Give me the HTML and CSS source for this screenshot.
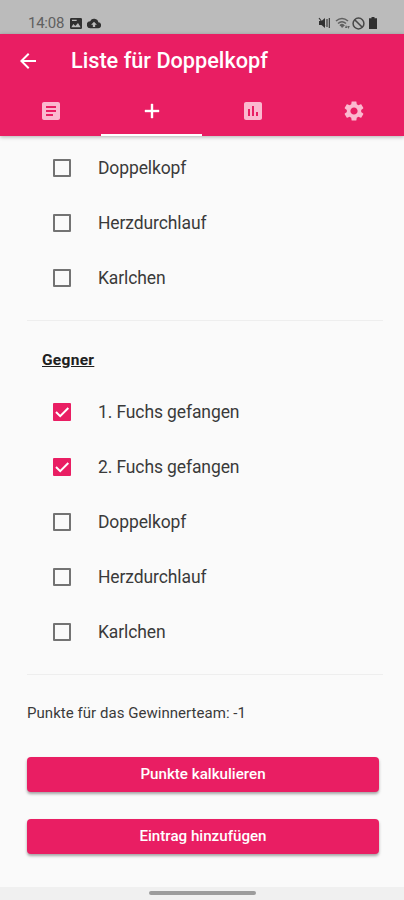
FILE: index.html
```html
<!DOCTYPE html>
<html lang="de">
<head>
<meta charset="utf-8">
<title>Liste für Doppelkopf</title>
<link rel="stylesheet" href="styles.css">
</head>
<body>
<div class="status">
  <span class="clock">14:08</span>
  <svg class="s-image" viewBox="3 3 18 18" preserveAspectRatio="none"><path d="M21 19V5a2 2 0 0 0-2-2H5a2 2 0 0 0-2 2v14a2 2 0 0 0 2 2h14a2 2 0 0 0 2-2zM8 13l3 3 4-5 4 7H5zM6 6h7v2H6z" fill-rule="evenodd"/></svg>
  <svg class="s-cloud" viewBox="0 3 24 18"><path d="M19.400 10A7.500 7.500 0 0 0 5.400 8 6 6 0 0 0 6 20h13a5 5 0 0 0 .4-10zM12 9l5 5h-3v4h-4v-4H7z" fill-rule="evenodd"/></svg>
  <div class="status-right">
    <svg class="s-mute" viewBox="0 0 12 12"><path d="M1 4h2.500L7 1v10L3.500 8H1z"/><path d="M1 1l6 8M9 2v8M11.300 1v10" fill="none" stroke="currentColor" stroke-width="1.100"/></svg>
    <svg class="s-wifi" viewBox="0 0 16 13"><path d="M1 4q6-5 12 0M3 6.500q4-3.500 8 0M5 8.700q2-2 4 0" fill="none" stroke="currentColor" stroke-width="1.600"/><path d="M5 8l2 3 3-3zM11 8l1.500 3H10zM13.500 12l-1.300-3h2.600z"/></svg>
    <svg class="s-block" viewBox="0 0 12 12"><circle cx="6" cy="6" r="5" fill="none" stroke="currentColor" stroke-width="1.400"/><path d="M2.500 2.500l7 7" stroke="currentColor" stroke-width="1.500"/></svg>
    <svg class="s-battery" viewBox="0 0 8 12"><path d="M2.500 0h3v1.300H8V12H0V1.300h2.500z"/></svg>
  </div>
</div>
<header class="appbar">
  <div class="title-row">
    <svg class="back" viewBox="0 0 24 24"><path d="M20 11H7.830l5.590-5.590L12 4l-8 8 8 8 1.410-1.410L7.830 13H20v-2z"/></svg>
    <h1>Liste für Doppelkopf</h1>
  </div>
  <nav class="tabs">
    <div class="tab"><svg viewBox="0 0 24 24"><path d="M19 3H5c-1.100 0-2 .9-2 2v14c0 1.100.9 2 2 2h14c1.100 0 2-.9 2-2V5c0-1.100-.9-2-2-2zm-5 14H7v-2h7v2zm3-4H7v-2h10v2zm0-4H7V7h10v2z"/></svg></div>
    <div class="tab active"><svg viewBox="0 0 24 24"><path d="M19 13h-6v6h-2v-6H5v-2h6V5h2v6h6v2z"/></svg></div>
    <div class="tab"><svg viewBox="0 0 24 24"><path d="M19 3H5c-1.100 0-2 .9-2 2v14c0 1.100.9 2 2 2h14c1.100 0 2-.9 2-2V5c0-1.100-.9-2-2-2zM9 17H7v-7h2v7zm4 0h-2V7h2v10zm4 0h-2v-4h2v4z"/></svg></div>
    <div class="tab"><svg viewBox="0 0 24 24"><path d="M19.140 12.940c.04-.3.060-.61.060-.94 0-.32-.02-.64-.07-.94l2.030-1.580c.18-.14.23-.41.120-.61l-1.920-3.320c-.12-.22-.37-.29-.59-.22l-2.390.96c-.5-.38-1.030-.7-1.620-.94l-.36-2.540c-.04-.24-.24-.41-.48-.41h-3.840c-.24 0-.43.170-.47.410l-.36 2.540c-.59.240-1.130.570-1.620.940l-2.390-.96c-.22-.08-.47 0-.59.220L2.740 8.870c-.12.210-.08.470.120.610l2.030 1.580c-.05.300-.09.630-.09.940s.02.640.070.940l-2.030 1.580c-.18.140-.23.410-.12.610l1.920 3.320c.12.220.37.290.59.220l2.390-.96c.5.380 1.030.700 1.620.940l.36 2.540c.05.240.24.410.48.410h3.840c.24 0 .44-.17.470-.41l.36-2.540c.59-.24 1.130-.56 1.620-.94l2.390.96c.22.080.47 0 .59-.22l1.920-3.320c.12-.22.070-.47-.12-.61l-2.010-1.580zM12 15.600c-1.980 0-3.600-1.620-3.600-3.600s1.620-3.600 3.600-3.600 3.600 1.620 3.600 3.600-1.620 3.600-3.600 3.600z"/></svg></div>
  </nav>
</header>
<main>
  <ul class="options">
    <li><span class="box"></span><span>Doppelkopf</span></li>
    <li><span class="box"></span><span>Herzdurchlauf</span></li>
    <li><span class="box"></span><span>Karlchen</span></li>
  </ul>
  <hr>
  <h2>Gegner</h2>
  <ul class="options">
    <li><span class="box checked"><svg viewBox="0 0 18 18"><path d="M3 9l4.200 4.200L15.300 5"/></svg></span><span>1. Fuchs gefangen</span></li>
    <li><span class="box checked"><svg viewBox="0 0 18 18"><path d="M3 9l4.200 4.200L15.300 5"/></svg></span><span>2. Fuchs gefangen</span></li>
    <li><span class="box"></span><span>Doppelkopf</span></li>
    <li><span class="box"></span><span>Herzdurchlauf</span></li>
    <li><span class="box"></span><span>Karlchen</span></li>
  </ul>
  <hr>
  <p class="points">Punkte für das Gewinnerteam: -1</p>
  <button>Punkte kalkulieren</button>
  <button>Eintrag hinzufügen</button>
</main>
<footer><div class="pill"></div></footer>
</body>
</html>
```
FILE: styles.css
```css
* { box-sizing: border-box; }
body {
  margin: 0;
  height: 900px;
  display: flex;
  flex-direction: column;
  overflow: hidden;
  background: #fafafa;
  color: #3a3a3a;
  font-family: Roboto, sans-serif;
}
svg { display: block; fill: currentColor; flex: none; }
.status {
  height: 34px;
  flex: none;
  display: flex;
  align-items: center;
  padding: 12px 25px 0 28px;
  background: #bbb;
  color: #303030;
}
.clock { font-size: 15px; line-height: 20px; width: 36px; letter-spacing: -0.25px; color: #606060; }
.s-image { width: 12px; height: 11px; margin-left: 6px; }
.s-cloud { width: 14px; height: 11px; margin-left: 5px; }
.status-right { margin-left: auto; display: flex; align-items: center; }
.s-mute { width: 12px; height: 12px; }
.s-wifi { width: 16px; height: 13px; margin-left: 5px; color: #606060; }
.s-block { width: 13px; height: 13px; margin-left: 1px; color: #484848; }
.s-battery { width: 8px; height: 12px; margin: 0 2px 0 4px; }
.appbar {
  height: 102px;
  flex: none;
  background: #e91e63;
  color: #fff;
  box-shadow: 0 1px 4px rgba(0, 0, 0, .3);
}
.title-row { height: 54px; display: flex; align-items: center; padding-left: 16px; }
.back { width: 24px; height: 24px; }
h1 { margin: 0 0 0 31px; font-size: 21.700px; font-weight: 500; line-height: 26px; white-space: nowrap; }
.tabs { display: flex; height: 48px; }
.tab {
  flex: 1;
  display: flex;
  justify-content: center;
  padding-top: 11px;
  color: #fbb9cf;
  border-bottom: 2px solid transparent;
}
.tab svg { width: 24px; height: 24px; }
.tab.active { color: #fff; border-color: #fff; }
.tab.active path { stroke: currentColor; stroke-width: .4; }
main { flex: 1; display: flex; flex-direction: column; padding: 4px 26px 0 27px; }
.options { list-style: none; margin: 0; padding: 0 0 0 26px; }
.options li {
  height: 55px;
  display: flex;
  align-items: center;
  gap: 27px;
  font-size: 17.500px;
  letter-spacing: -.11px;
  white-space: nowrap;
}
.box { width: 18px; height: 18px; border: 2px solid #737373; border-radius: 1px; }
.checked { border: 0; background: #e91e63; }
.checked path { fill: none; stroke: #fff; stroke-width: 2; }
hr { width: 356px; height: 1px; flex: none; margin: 15px 0 0; border: 0; background: #eee; }
h2 {
  margin: 29px 0 14px 15px;
  font-size: 15.500px;
  font-weight: 700;
  line-height: 20px;
  letter-spacing: .3px;
  color: #202020;
  text-decoration: underline;
}
.points { margin: 28px 0 34px; font-size: 15px; line-height: 20px; letter-spacing: .04px; white-space: nowrap; }
button {
  width: 352px;
  height: 35px;
  flex: none;
  margin: 0 0 27px;
  padding: 0;
  border: 0;
  border-radius: 4px;
  background: #e91e63;
  color: #fff;
  font: 500 15.150px/35px Roboto, sans-serif;
  box-shadow: 0 2px 3px rgba(0, 0, 0, .35);
}
footer { height: 13px; flex: none; padding-top: 4px; background: #f0f0f0; }
.pill { width: 107px; height: 4px; margin-left: 149px; border-radius: 2px; background: #9c9c9c; }
```
